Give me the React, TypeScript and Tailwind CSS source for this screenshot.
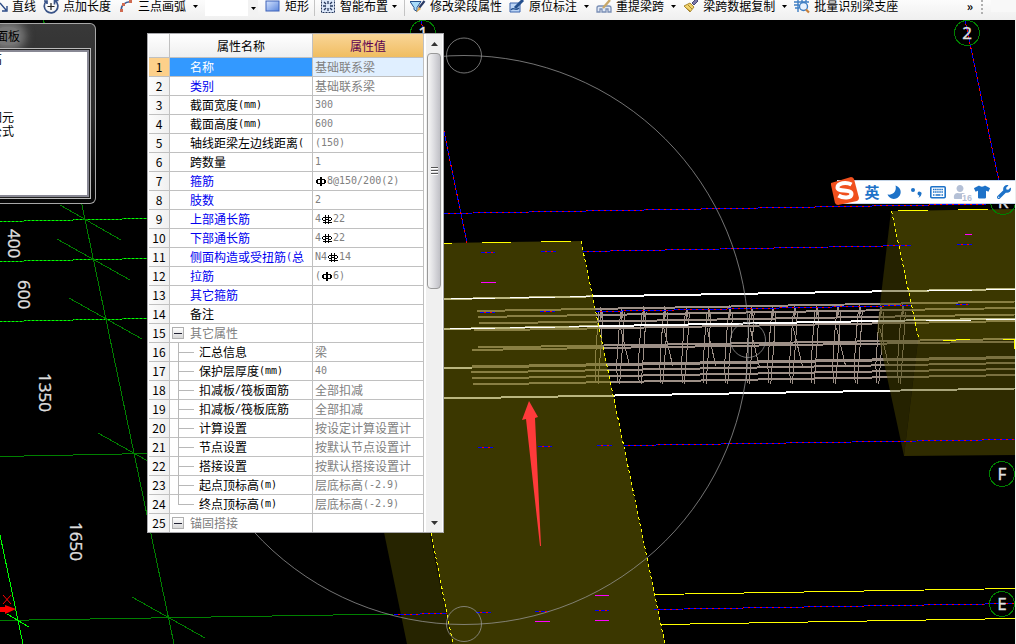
import React from "react";
import { FaMoon, FaRegKeyboard, FaUser, FaTshirt, FaWrench } from "react-icons/fa";

type Row = {
  name: string;
  value?: string;
  kind?: "blue" | "group" | "child" | "last";
};

const rows: Row[] = [
  { name: "名称", value: "基础联系梁" },
  { name: "类别", value: "基础联系梁", kind: "blue" },
  { name: "截面宽度(mm)", value: "300" },
  { name: "截面高度(mm)", value: "600" },
  { name: "轴线距梁左边线距离(", value: "(150)" },
  { name: "跨数量", value: "1" },
  { name: "箍筋", value: "A8@150/200(2)", kind: "blue" },
  { name: "肢数", value: "2", kind: "blue" },
  { name: "上部通长筋", value: "4C22", kind: "blue" },
  { name: "下部通长筋", value: "4C22", kind: "blue" },
  { name: "侧面构造或受扭筋(总", value: "N4C14", kind: "blue" },
  { name: "拉筋", value: "(A6)", kind: "blue" },
  { name: "其它箍筋", kind: "blue" },
  { name: "备注" },
  { name: "其它属性", kind: "group" },
  { name: "汇总信息", value: "梁", kind: "child" },
  { name: "保护层厚度(mm)", value: "40", kind: "child" },
  { name: "扣减板/筏板面筋", value: "全部扣减", kind: "child" },
  { name: "扣减板/筏板底筋", value: "全部扣减", kind: "child" },
  { name: "计算设置", value: "按设定计算设置计", kind: "child" },
  { name: "节点设置", value: "按默认节点设置计", kind: "child" },
  { name: "搭接设置", value: "按默认搭接设置计", kind: "child" },
  { name: "起点顶标高(m)", value: "层底标高(-2.9)", kind: "child" },
  { name: "终点顶标高(m)", value: "层底标高(-2.9)", kind: "last" },
  { name: "锚固搭接", kind: "group" },
];

function RebarSymbol({ grade }: { grade: "A" | "C" }) {
  return (
    <svg className="h-3 w-3 shrink-0" viewBox="0 0 12 12" fill="#000" shapeRendering="crispEdges">
      {grade === "A" ? (
        <path fillRule="evenodd" d="M5 2h2v2h3v1h1v3h-1v1H7v2H5V9H2V8H1V5h1V4h3zM5 5H3v3h2zM7 5v3h2V5z" />
      ) : (
        <path fillRule="evenodd" d="M4 2h1v2h2V2h1v2h2v1h1v2h-1v1H8v1h3v1H8v1H7v-1H5v1H4v-1H2V9h2V8H2V7H1V5h1V4h2zM4 5H2v2h2zM5 5v1h2V5zM5 7v2h2V7zM8 5v2h2V5z" />
      )}
    </svg>
  );
}

// Latin runs are half the width of a Chinese glyph, so they use a mono face.
function Mixed({ text, symbols = false }: { text: string; symbols?: boolean }) {
  const parts = text.match(symbols ? /[AC]|[B\x20-@D-~]+|[^\x00-\x7f]+/g : /[\x00-\x7f]+|[^\x00-\x7f]+/g) ?? [];
  return (
    <span className="flex items-center whitespace-nowrap">
      {parts.map((p, i) =>
        symbols && (p === "A" || p === "C") ? (
          <RebarSymbol key={i} grade={p} />
        ) : p.charCodeAt(0) < 128 ? (
          <span key={i} className="font-['DejaVu_Sans_Mono',monospace] text-[10px]">{p}</span>
        ) : (
          <span key={i}>{p}</span>
        )
      )}
    </span>
  );
}

function Caret() {
  return (
    <svg className="h-[3px] w-[5px] shrink-0" viewBox="0 0 5 3">
      <path d="M0 0h5L2.500 3z" fill="#000" />
    </svg>
  );
}

function CaretButton({ label }: { label: string }) {
  return (
    <button aria-label={label} className="flex h-3 items-center"><Caret /></button>
  );
}

function Tool({ label, children, menu = false }: { label: string; children: React.ReactNode; menu?: boolean }) {
  return (
    <button className={menu ? "flex shrink-0 items-center gap-1 pr-0.5" : "flex shrink-0 items-center gap-1"}>
      {children}
      <span className="whitespace-nowrap">{label}</span>
      {menu && <Caret />}
    </button>
  );
}

const ic = "h-4 w-4 shrink-0";

function Toolbar() {
  return (
    <header className="flex h-5 items-center gap-[7px] overflow-hidden bg-linear-to-b from-[#fcfcfc] to-[#efefef] pb-2 text-[12px] leading-3 text-black">
      <Tool label="直线">
        <svg className="h-4 w-2 shrink-0" viewBox="0 0 8 16" fill="none" stroke="#2b4a86" strokeWidth="1.400"><path d="M0 5l6 7M7 8v5H2" /></svg>
      </Tool>
      <Tool label="点加长度">
        <svg className={ic} viewBox="0 0 16 16" fill="none" stroke="#3a5488" strokeWidth="1.700">
          <path d="M12 2.500A6.800 6.800 0 1 1 3 3.500M11.500 6.500V2.500h4M1 3h3v3" /><path d="M8 5v7M4.500 8.500h7" stroke="#222" strokeWidth="1.200" />
        </svg>
      </Tool>
      <Tool label="三点画弧">
        <svg className={ic} viewBox="0 0 16 16" fill="none"><path d="M3 13C3 8 6 4 13 3.500" stroke="#3d5a90" strokeWidth="1.500" /><path d="M2 11h3v3H2zM4 5h3v3H4zM11 2h3v3h-3z" fill="#d06a50" /></svg>
      </Tool>
      <CaretButton label="三点画弧选项" />
      <div className="flex w-[53px] shrink-0 self-stretch">
        <div className="-mb-1 flex-1 bg-white" />
        <button aria-label="展开列表" className="-mb-1 flex w-2.5 items-center justify-center bg-[#f2f2f2]"><Caret /></button>
      </div>
      <Tool label="矩形">
        <svg className={ic} viewBox="0 0 16 16"><defs><linearGradient id="rc" x2="1" y2="1"><stop stopColor="#d5e4ff" /><stop offset="1" stopColor="#5b86dd" /></linearGradient></defs><rect x="1" y="3" width="13" height="10" fill="url(#rc)" stroke="#3e62b8" /></svg>
      </Tool>
      <span className="-mx-0.5 h-5 w-px shrink-0 bg-[#c4c4c4]" />
      <Tool label="智能布置" menu>
        <svg className={ic} viewBox="0 0 16 16" fill="none" stroke="#26385e"><rect x="1.500" y="1.500" width="13" height="13" fill="#dce8fa" strokeDasharray="2 1" /><path d="M8 3v3M8 10v3M3 8h3M10 8h3M4 4l2 2M12 4l-2 2M4 12l2-2M12 12l-2-2" strokeWidth="1.300" /></svg>
      </Tool>
      <span className="-mx-0.5 h-5 w-px shrink-0 bg-[#c4c4c4]" />
      <Tool label="修改梁段属性">
        <svg className={ic} viewBox="0 0 16 16" fill="none"><path d="M0 3.500h11l-4 6v4l-3-2v-2z" fill="#a9dcfa" stroke="#24508e" /><path d="M9 10l5.500-7" stroke="#2a3b66" strokeWidth="2.200" /><path d="M9 9l-3 5.500 5-3.500z" fill="#e0a848" /></svg>
      </Tool>
      <Tool label="原位标注">
        <svg className={ic} viewBox="0 0 16 16" fill="none"><path d="M1 5h10v9H1z" fill="#bcd5f5" stroke="#3a64ad" /><path d="M6 10l8-8" stroke="#24508e" strokeWidth="3" /><path d="M2 12c2-4 4 2 8-2" stroke="#24508e" strokeWidth="1.400" /></svg>
      </Tool>
      <CaretButton label="原位标注选项" />
      <Tool label="重提梁跨">
        <svg className={ic} viewBox="0 0 16 16" fill="none" stroke="#7a8fb5" strokeWidth="1.300"><path d="M1 14v-4q0-2 2-2h10q2 0 2 2v4h-3v-3h-2v3H6v-3H4v3z" fill="#dfe8f5" /><path d="M7 10l7-8" stroke="#c9a868" strokeWidth="2.400" /></svg>
      </Tool>
      <CaretButton label="重提梁跨选项" />
      <Tool label="梁跨数据复制">
        <svg className={ic} viewBox="0 0 16 16"><path d="M1 8l6-3 4 4-4 5z" fill="#f3d46b" stroke="#a88732" /><path d="M9 5l4-4 2 2-4 4z" fill="#7d7aa8" stroke="#4c4a78" /><path d="M3 10l4 3M5 7l4 4" stroke="#a88732" /></svg>
      </Tool>
      <CaretButton label="梁跨数据复制选项" />
      <Tool label="批量识别梁支座">
        <svg className={ic} viewBox="0 0 16 16" fill="none" stroke="#3f7fc4" strokeWidth="1.400"><path d="M0 4h15M0 7h5M4 1v13M8 1v3M12 1v3M1 10h4" /><circle cx="9.500" cy="8.500" r="4" fill="#e8f3ff" /><path d="M12 11.500l3 3" stroke="#c9803a" strokeWidth="2.200" /></svg>
      </Tool>
      <button aria-label="更多工具" className="ml-auto font-bold">»</button>
      <svg className="h-4 w-1 shrink-0" viewBox="0 0 4 16" fill="#b0b0b0"><path d="M1 2h2v2H1zM1 6h2v2H1zM1 10h2v2H1zM1 14h2v2H1z" /></svg>
      <span className="w-[25px] shrink-0 self-stretch bg-[#f8f8f8]" />
    </header>
  );
}

function AxisLine({ d }: { d: string }) {
  return (
    <g strokeWidth="1" shapeRendering="crispEdges" fill="none">
      <path d={d} stroke="#f00" />
      <path d={d} stroke="#00f" strokeDasharray="4 2" />
    </g>
  );
}

function GreenLine({ d }: { d: string }) {
  return (
    <g strokeWidth="1" shapeRendering="crispEdges" fill="none">
      <path d={d} stroke="#009000" />
      <path d={d} stroke="#00ff00" strokeDasharray="2 2" />
    </g>
  );
}

function Bubble({ x, y, label }: { x: number; y: number; label: string }) {
  return (
    <g>
      <circle cx={x} cy={y} r="12.500" fill="none" stroke="#008000" shapeRendering="crispEdges" />
      <text x={x} y={y + 6} textAnchor="middle" fill="#ddd" stroke="#ddd" strokeWidth="0.400" className="font-['Noto_Sans',sans-serif] text-[17px]">{label}</text>
    </g>
  );
}

const stirrups = Array.from({ length: 15 }, (_, i) => 600 + i * 21.6);

const dimensions = [
  { x: 8, y: 229, t: "400" },
  { x: 18, y: 280, t: "600" },
  { x: 39, y: 373, t: "1350" },
  { x: 70, y: 522, t: "1650" },
];

function Drawing() {
  return (
    <svg className="absolute inset-0 h-full w-full" viewBox="0 20 1016 624" preserveAspectRatio="xMinYMin slice">
      <GreenLine d="M0 221.500L147 218.500M0 261.500L147 258.500M0 321.500L147 318.500" />
      <g fill="none" stroke="#008000" shapeRendering="crispEdges">
        <path d="M43.500 20L82 205L174 644M60 205l61 35M57 239l73 41M69 298l73 41M98 433l73 41M132 597l73 41M0 456.500L147 453.500M0 620.500L394 614" />
        <path d="M0 535l23 109M7 614l22 13" stroke="#0f0" />
      </g>
      <path d="M3 595l8 9M11 595l-8 9" stroke="#f00" />
      <path d="M0 607h5v-2l11 4-11 5v-2H0z" fill="#f00" />
      {dimensions.map((d) => (
        <text key={d.t} transform={`translate(${d.x} ${d.y}) rotate(90)`} fill="#ddd" stroke="#ddd" strokeWidth="0.300" className="font-['Noto_Sans',sans-serif] text-[17px]">{d.t}</text>
      ))}

      <g fill="none" stroke="#9d9087" strokeWidth="2" shapeRendering="crispEdges">
        <path d="M477 311L1015 301.500M478 317L1015 308M479 323.500L1015 314.500M474 330.500L1015 321" />
        <path d="M478 347.500L1015 339M472 350L1015 341.500" />
        <path d="M472 367L1015 357.500" strokeWidth="3" />
        <path d="M471 372.500L1015 363M472 378.500L1015 369M473 384.500L1015 375" />
      </g>
      <g fill="none" stroke="#9d9087" shapeRendering="crispEdges">
        {stirrups.map((x, i) => (
          <path
            key={x}
            d={`M${x} ${307 - i * 0.3}v14M${x + 1} ${310 - i * 0.3}v8M${x - 1} 312L${x - 3} 335L${x - 5} 365L${x - 4} 383M${x + 3} 312L${x + 1} 345L${x - 2} 384${i % 2 ? `M${x - 1} 328L${x + 8} 366` : ""}`}
          />
        ))}
      </g>

      <g fill="none" stroke="#fff" strokeWidth="2" shapeRendering="crispEdges">
        <path d="M444 299L1015 289M444 329L1015 318.500M444 368.500L472 368M444 398.500L1015 388.500" />
      </g>

      <path d="M375 244L581 241L665 644L452 644z" fill="#766e00" opacity=".5" />
      <path d="M365 440L411 440L452 644L407 644z" fill="#262400" />
      <path d="M891 211L1015 209V340H918z" fill="#766e00" opacity=".5" />
      <path d="M918 340H1015V455L904 456z" fill="#5a5300" opacity=".52" />
      <path d="M891 211L918 340L904 456L877 330z" fill="#4a4400" opacity=".5" />

      <g fill="none" stroke="#fff" shapeRendering="crispEdges">
        <path d="M451 298.500h44M510 297.500h45M570 296.500h20M450 328.500h45M510 327.500h45M569 326.500h29M927 290.500h45M986 289.500h29M926 320.500h45M986 319.500h29" />
      </g>

      <AxisLine d="M421 20L467 243" />
      <AxisLine d="M965 20L1003 200" />
      <AxisLine d="M444 213.500L1015 203.500" />
      <AxisLine d="M583 251.500L911 245.500M481 252.500h14M541 251.500h15M957 244.500h15" />
      <AxisLine d="M596 311.500L911 305.500M480 312.500h15M540 311.500h15M956 304.500h13" />
      <AxisLine d="M624 445.500L1015 439.500M478 447.500h15M538 446.500h14M597 445.500h15" />
      <AxisLine d="M394 614.500L447 613.500M476 612.500h15M535 611.500h14M595 610.500h14M654 609.500L1015 603.500" />

      <g stroke="#f0f" shapeRendering="crispEdges">
        <path d="M481 282.500h15M965 234.500h7M595 595.500h14M535 621.500h15M595 620.500h14" />
      </g>

      <g fill="none" stroke="#ff0" shapeRendering="crispEdges">
        <path d="M444 243.500h8M482 242.500h29M541 241.500h30M898 210.500h30M958 209.500h30M943 340.500h13M956 339.500h14M1003 339.500h11v9" />
        <path d="M655 594.500L1015 588.500M661 624.500L1015 618.500" />
        <path d="M581 241L665 644M431 533L453 644M891.500 211L919 340" strokeDasharray="3 3" />
      </g>

      <g fill="none" stroke="#999" strokeOpacity=".75">
        <circle cx="464" cy="340" r="284.500" />
        <circle cx="464" cy="55.500" r="17.500" />
        <circle cx="464" cy="624" r="17.500" />
        <circle cx="748" cy="340" r="17.500" />
      </g>

      <Bubble x={423} y={33} label="1" />
      <Bubble x={967} y={33} label="2" />
      <Bubble x={1003} y={202} label="K" />
      <Bubble x={1002} y={474} label="F" />
      <Bubble x={1002} y={604} label="E" />

      <path d="M529 401l9 16-3 1 6 128h-1l-14-127-4 1z" fill="#ff3a3a" />
      <path d="M1015.500 20v624" stroke="#eee" />
    </svg>
  );
}

function SidePanel() {
  return (
    <section className="absolute top-[3px] left-0 flex h-[181px] w-24 flex-col overflow-hidden rounded-r-md border border-l-0 border-[#a8a8a8] bg-linear-to-b from-[#383838] via-[#2c2c2c] to-[#060606] pr-1 pb-1 font-['Noto_Sans_CJK_SC',sans-serif] text-[12px]">
      <h2 className="flex h-6 w-5 shrink-0 items-center justify-end whitespace-nowrap text-black">
        <span className="rounded-full bg-[#777] shadow-[0_0_8px_6px_#777]">面板</span>
      </h2>
      <div className="flex-1 border border-l-0 border-[#bbb] bg-[#222] pt-px pr-px pb-px">
        <div className="flex h-full flex-col border-2 border-l-0 border-[#888894] bg-white leading-[14px] text-black">
          <span className="flex w-0.5 justify-end">高</span>
          <span className="mt-11 flex w-3.5 justify-end whitespace-nowrap">图元</span>
          <span className="flex w-3.5 justify-end whitespace-nowrap">公式</span>
        </div>
      </div>
    </section>
  );
}

function NameCell({ row, index }: { row: Row; index: number }) {
  if (row.kind === "group") {
    return (
      <div className="flex h-[18px] items-center gap-1.5 pl-0.5 text-[#808080]">
        <button aria-label={"折叠" + row.name} className="flex h-3 w-3 shrink-0 items-center justify-center border border-[#b0b0b0] bg-linear-to-b from-white to-[#d8d8d8]">
          <span className="h-px w-2 bg-[#223]" />
        </button>
        <Mixed text={row.name} />
      </div>
    );
  }
  if (row.kind === "child" || row.kind === "last") {
    return (
      <div className="flex h-[18px] items-center gap-[5px] pl-2 text-black">
        <span className="flex h-full w-4 shrink-0 flex-col">
          <span className="flex-1 border-b border-l border-[#b8b8b8]" />
          <span className={row.kind === "last" ? "flex-1" : "-mb-px flex-1 border-l border-[#b8b8b8]"} />
        </span>
        <Mixed text={row.name} />
      </div>
    );
  }
  const tone = index === 0 ? "bg-[#3399ff] text-white" : row.kind === "blue" ? "text-[#0000f0]" : "text-black";
  return (
    <div className={"flex h-[18px] items-center overflow-hidden pl-5 " + tone}>
      <Mixed text={row.name} />
    </div>
  );
}

function PropertyWindow() {
  return (
    <section className="absolute top-[13px] left-[147px] flex w-[297px] gap-0.5 border border-[#a8a8ac] bg-white px-px font-['Noto_Sans_CJK_SC',sans-serif] text-[12px] leading-[18px]">
      <table className="w-[275px] table-fixed border-separate border-spacing-0">
        <colgroup>
          <col className="w-[21px]" />
          <col className="w-[143px]" />
          <col />
        </colgroup>
        <thead>
          <tr className="h-6">
            <th aria-label="序号" className="border-r border-b border-[#c0c0c0] bg-linear-to-b from-white to-[#efefef] p-0" />
            <th className="border-r border-b border-[#c0c0c0] bg-linear-to-b from-white to-[#efefef] p-0 font-normal text-black">属性名称</th>
            <th className="border-r border-b border-[#c0c0c0] bg-linear-to-b from-[#f9d596] to-[#f0bd60] p-0 font-normal text-[#5c0050]">属性值</th>
          </tr>
        </thead>
        <tbody className="[&>tr:last-child>*]:border-b-0">
          {rows.map((row, i) => (
            <tr key={row.name}>
              <th scope="row" className={"border-r border-b border-[#c0c0c0] p-0 text-center font-normal text-black " + (i === 0 ? "bg-[#fdd08a]" : "bg-linear-to-r from-[#fcfcfc] to-[#f0f0f0]")}>{i + 1}</th>
              <td className="border-r border-b border-[#c0c0c0] p-0"><NameCell row={row} index={i} /></td>
              <td className={"border-r border-b border-[#c0c0c0] p-0 text-[#808080] " + (i === 0 ? "bg-[#e0efff]" : "bg-white")}>
                <div className="flex h-[18px] items-center overflow-hidden pl-0.5">
                  <Mixed text={row.value ?? ""} symbols />
                </div>
              </td>
            </tr>
          ))}
        </tbody>
      </table>
      <div className="flex flex-1 flex-col bg-[#f0f0f0]">
        <button aria-label="向上滚动" className="flex h-[19px] items-center justify-center">
          <svg className="h-1 w-[7px]" viewBox="0 0 7 4"><path d="M0 4h7L3.500 0z" fill="#333" /></svg>
        </button>
        <div className="mx-px flex h-[236px] flex-col items-center justify-center gap-px rounded-sm border border-[#999] bg-linear-to-r from-[#f6f6f6] via-[#dcdce0] to-[#c0c0c6]">
          <span className="h-0.5 w-[7px] border-t border-[#555] bg-white" />
          <span className="h-0.5 w-[7px] border-t border-[#555] bg-white" />
          <span className="h-0.5 w-[7px] border-t border-[#555] bg-white" />
        </div>
        <div className="flex-1" />
        <button aria-label="向下滚动" className="flex h-[19px] items-center justify-center">
          <svg className="h-1 w-[7px]" viewBox="0 0 7 4"><path d="M0 0h7L3.500 4z" fill="#333" /></svg>
        </button>
      </div>
    </section>
  );
}

function InputMethodBar() {
  const btn = "relative flex h-4 w-4 shrink-0 items-center justify-center";
  return (
    <div className="absolute top-[160px] right-px flex h-6 items-center gap-1.5 border border-r-0 border-[#c4d4e6] bg-white pr-[3px] pl-[26px] font-['Noto_Sans_CJK_SC',sans-serif] text-[15px] text-[#1d72c8]">
      <svg className="absolute -top-1 -left-[7px] h-7 w-7" viewBox="0 0 28 28">
        <path d="M0 6L20 0Q22 0 23 2L28 21Q28 23 26 24L7 28Q5 28 4 26L0 8z" fill="#f0501e" />
        <path d="M20.500 7.500C15 4.500 6.500 6 6.500 10.500C6.500 15.500 20.500 11.500 20.500 17C20.500 21.500 12 21.500 7.500 18.500" fill="none" stroke="#fff" strokeWidth="4" />
      </svg>
      <button className={btn + " font-bold"}>英</button>
      <button aria-label="半角" className={btn}>
        <svg className="h-4 w-4" viewBox="0 0 16 16" fill="currentColor"><path d="M9.500 1.500A6.800 6.800 0 1 1 1.500 10.500C7 11.500 11 7 9.500 1.500z" /></svg>
      </button>
      <button aria-label="标点" className={btn}>
        <svg className="h-4 w-4" viewBox="0 0 16 16" fill="currentColor"><circle cx="5" cy="6" r="2" /><path d="M9.500 9.500a2 2 0 1 1 3.800 1c-.4 1.700-1.500 2.700-3 3.200 .9-1 1.200-1.600 1-2.200-1-.1-1.800-.9-1.800-2z" /></svg>
      </button>
      <button aria-label="软键盘" className={btn}>
        <svg className="h-4 w-4" viewBox="0 0 16 16" fill="none" stroke="currentColor">
          <rect x=".8" y="2.800" width="14.400" height="10.900" rx="1" strokeWidth="1.600" />
          <path d="M3 5.500h10M3 8h10" strokeWidth="1.400" strokeDasharray="1.500 .6" /><path d="M3 11h1.500M5.500 11h5M11.500 11H13" strokeWidth="1.400" />
        </svg>
      </button>
      <button aria-label="账户" className={btn + " text-[#b4c0d6]"}>
        <FaUser className="h-3.5 w-3.5" />
        <span className="absolute -right-1 -bottom-0.5 bg-white font-['Liberation_Sans',sans-serif] text-[9px] leading-2 font-bold">16</span>
      </button>
      <button aria-label="皮肤" className={btn}><FaTshirt className="h-4 w-4" /></button>
      <button aria-label="设置" className={btn}><FaWrench className="h-3.5 w-3.5" /></button>
    </div>
  );
}

export default function App() {
  return (
    <div className="flex min-h-screen flex-col bg-black font-['Noto_Sans_CJK_SC',sans-serif]">
      <Toolbar />
      <main className="relative flex-1 overflow-hidden">
        <Drawing />
        <SidePanel />
        <PropertyWindow />
        <InputMethodBar />
      </main>
    </div>
  );
}
